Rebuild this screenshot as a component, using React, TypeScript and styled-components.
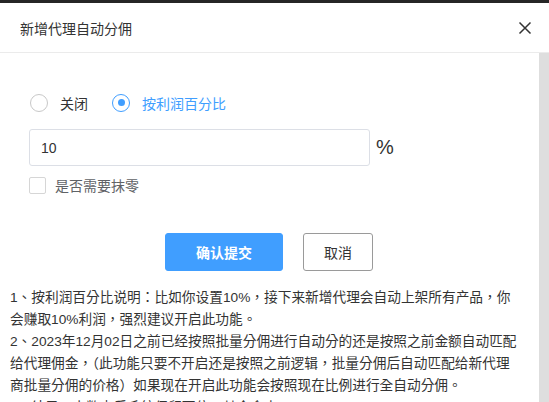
import React from "react";
import styled, { createGlobalStyle } from "styled-components";

const GlobalStyle = createGlobalStyle`
  html, body { margin: 0; padding: 0; background: #fff; }
  body { font-family: "Liberation Sans", "Noto Sans CJK SC", sans-serif; color: #333; }
  * { box-sizing: border-box; }
`;

const Page = styled.div`
  width: 549px;
  height: 402px;
  display: flex;
  flex-direction: column;
  overflow: hidden;
  background: #fff;
`;

const TopStrip = styled.div`
  height: 3px;
  background: #262626;
  flex: none;
`;

const Header = styled.div`
  flex: none;
  height: 50px;
  border-bottom: 1px solid #ebebeb;
  display: flex;
  align-items: center;
  justify-content: space-between;
  padding: 0 17px 0 20px;
`;

const Title = styled.div`
  font-size: 14px;
  color: #333;
  font-family: "Noto Sans CJK SC", sans-serif;
`;

const CloseButton = styled.button`
  border: 0;
  background: none;
  padding: 0;
  width: 14px;
  height: 14px;
  display: flex;
  align-items: center;
  justify-content: center;
  cursor: pointer;
`;

const Body = styled.div`
  flex: 1;
  min-height: 0;
  display: flex;
`;

const Content = styled.div`
  flex: 1;
  min-width: 0;
  overflow: hidden;
  padding: 0 16px 0 10px;
`;

const ScrollBar = styled.div`
  flex: none;
  width: 10px;
  background: #dedede;
`;

const RadioRow = styled.div`
  margin-top: 40px;
  height: 19px;
  padding-left: 20px;
  display: flex;
  align-items: center;
`;

const RadioItem = styled.label`
  display: flex;
  align-items: center;
  margin-right: 24px;
  cursor: pointer;
`;

const RadioCircle = styled.span<{ $checked?: boolean }>`
  width: 18px;
  height: 18px;
  border-radius: 50%;
  border: 1.5px solid ${(p) => (p.$checked ? "#409eff" : "#c8c8c8")};
  background: #fff;
  display: flex;
  align-items: center;
  justify-content: center;
  &::after {
    content: "";
    width: 7px;
    height: 7px;
    border-radius: 50%;
    background: ${(p) => (p.$checked ? "#409eff" : "transparent")};
  }
`;

const RadioLabel = styled.span<{ $checked?: boolean }>`
  margin-left: 12px;
  font-size: 14px;
  font-family: "Noto Sans CJK SC", sans-serif;
  color: ${(p) => (p.$checked ? "#409eff" : "#333")};
`;

const InputRow = styled.div`
  margin-top: 17px;
  padding-left: 19px;
  display: flex;
  align-items: center;
`;

const TextInput = styled.input`
  width: 341px;
  height: 37px;
  border: 1px solid #dcdfe6;
  border-radius: 3px;
  padding: 0 11px;
  font-size: 14px;
  color: #333;
  font-family: "Liberation Sans", "Noto Sans CJK SC", sans-serif;
  outline: none;
`;

const Unit = styled.span`
  margin-left: 6px;
  font-size: 20px;
  color: #333;
  font-family: "Liberation Sans", sans-serif;
`;

const CheckRow = styled.label`
  margin-top: 11px;
  height: 17px;
  padding-left: 19px;
  display: flex;
  align-items: center;
  cursor: pointer;
`;

const CheckBox = styled.span`
  flex: none;
  width: 17px;
  height: 17px;
  border: 1px solid #d6d6d6;
  border-radius: 2px;
  background: #fff;
`;

const CheckLabel = styled.span`
  margin-left: 9px;
  font-size: 14px;
  line-height: 17px;
  color: #606266;
  font-family: "Noto Sans CJK SC", sans-serif;
`;

const ButtonRow = styled.div`
  margin-top: 39px;
  display: flex;
  justify-content: center;
  gap: 20px;
  padding-left: 5px;
`;

const Button = styled.button<{ $primary?: boolean }>`
  height: 38px;
  width: ${(p) => (p.$primary ? "118px" : "70px")};
  border-radius: 3px;
  font-size: 14px;
  font-family: "Noto Sans CJK SC", sans-serif;
  font-weight: ${(p) => (p.$primary ? 700 : 400)};
  color: ${(p) => (p.$primary ? "#fff" : "#333")};
  background: ${(p) => (p.$primary ? "#409eff" : "#fff")};
  border: 1px solid ${(p) => (p.$primary ? "#409eff" : "#9a9a9a")};
  cursor: pointer;
  padding: 0;
`;

const Notes = styled.div`
  margin-top: 16px;
  font-size: 13.7px;
  line-height: 22px;
  color: #333;
  font-family: "Liberation Sans", "Noto Sans CJK TC", sans-serif;
  padding-bottom: 20px;
`;

const NoteLine = styled.div``;

export default function App() {
  return (
    <>
      <GlobalStyle />
      <Page>
        <TopStrip />
        <Header>
          <Title>新增代理自动分佣</Title>
          <CloseButton aria-label="close">
            <svg width="14" height="14" viewBox="0 0 14 14">
              <path d="M1.5 1.5 L12.5 12.5 M12.5 1.5 L1.5 12.5" stroke="#333" strokeWidth="1.5" fill="none" />
            </svg>
          </CloseButton>
        </Header>
        <Body>
          <Content>
            <RadioRow>
              <RadioItem>
                <RadioCircle />
                <RadioLabel>关闭</RadioLabel>
              </RadioItem>
              <RadioItem>
                <RadioCircle $checked />
                <RadioLabel $checked>按利润百分比</RadioLabel>
              </RadioItem>
            </RadioRow>
            <InputRow>
              <TextInput defaultValue="10" />
              <Unit>%</Unit>
            </InputRow>
            <CheckRow>
              <CheckBox />
              <CheckLabel>是否需要抹零</CheckLabel>
            </CheckRow>
            <ButtonRow>
              <Button $primary>确认提交</Button>
              <Button>取消</Button>
            </ButtonRow>
            <Notes>
              <NoteLine>1、按利润百分比说明：比如你设置10%，接下来新增代理会自动上架所有产品，你会赚取10%利润，强烈建议开启此功能。</NoteLine>
              <NoteLine>2、2023年12月02日之前已经按照批量分佣进行自动分的还是按照之前金额自动匹配给代理佣金，（此功能只要不开启还是按照之前逻辑，批量分佣后自动匹配给新代理商批量分佣的价格）如果现在开启此功能会按照现在比例进行全自动分佣。</NoteLine>
              <NoteLine>3、结果：小数点后系统保留两位，其余舍去。</NoteLine>
            </Notes>
          </Content>
          <ScrollBar />
        </Body>
      </Page>
    </>
  );
}
